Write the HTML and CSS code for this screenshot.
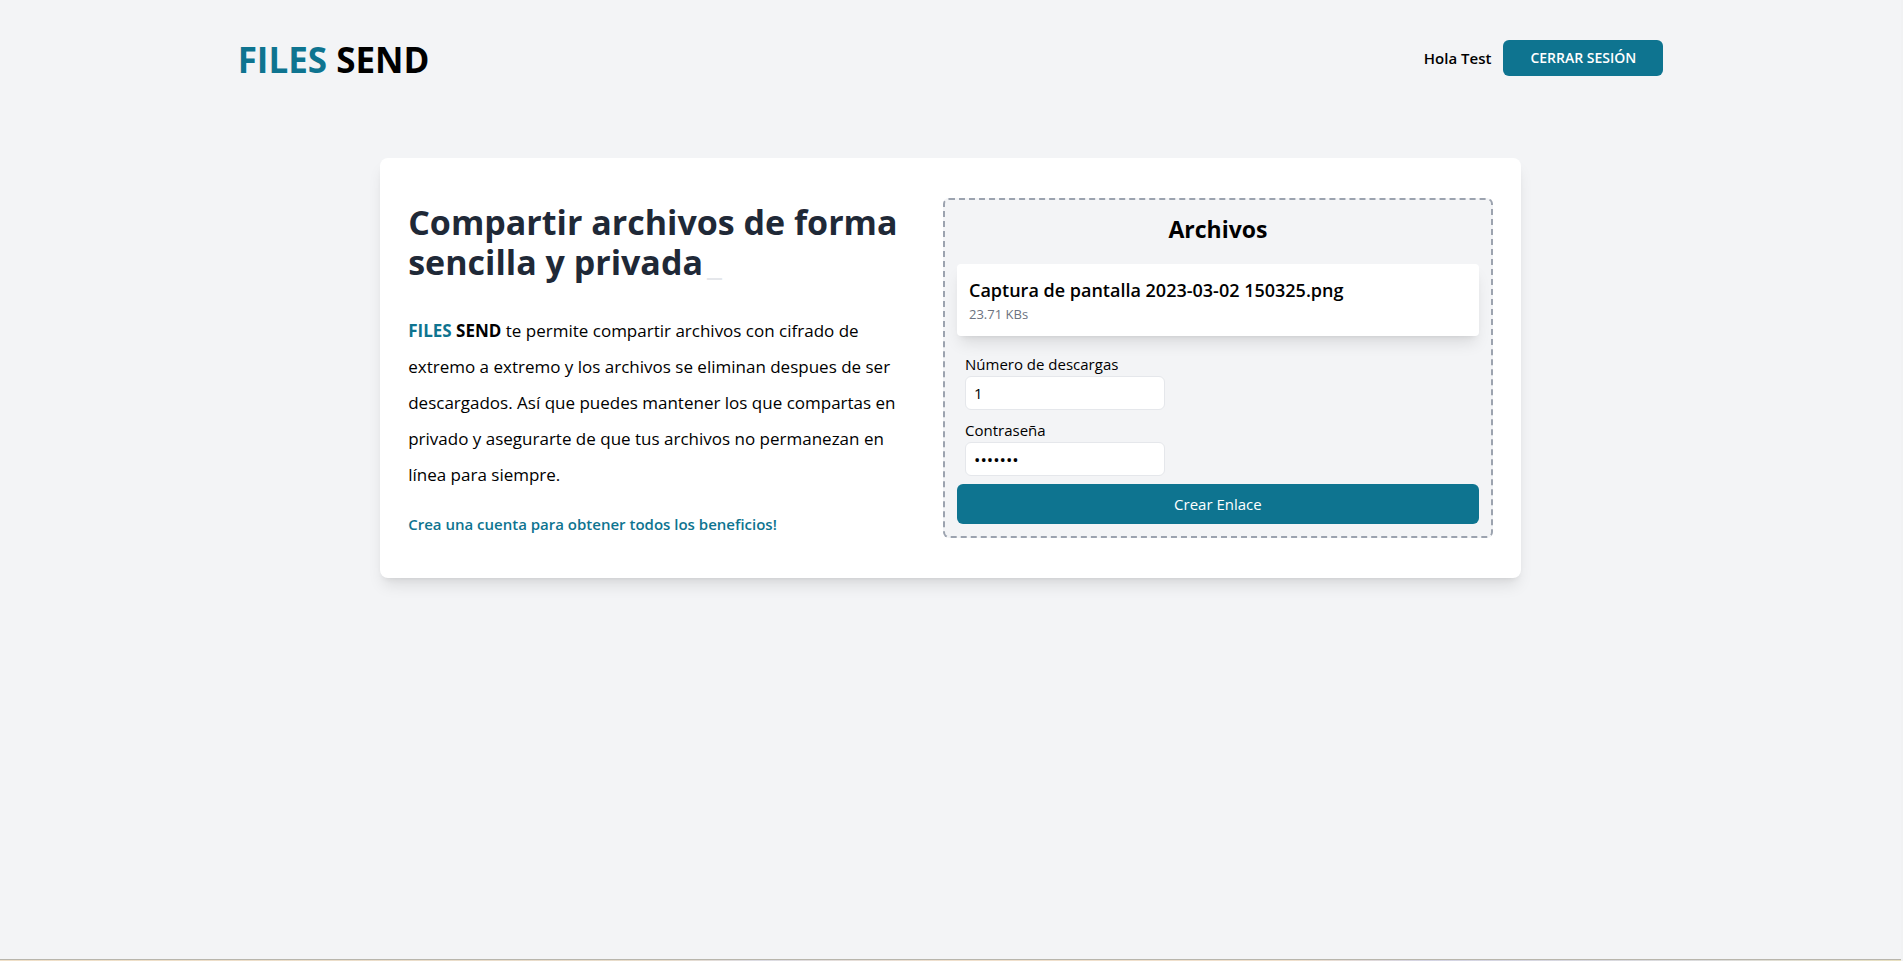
FILE: index.html
```html
<!DOCTYPE html>
<html lang="es">
<head>
<meta charset="utf-8">
<meta name="viewport" content="width=device-width, initial-scale=1">
<title>Files Send</title>
<link rel="stylesheet" href="styles.css">
</head>
<body>
<div class="page">
  <header class="header">
    <a class="logo" href="#"><span class="accent">FILES</span> SEND</a>
    <div class="session">
      <p class="greeting">Hola Test</p>
      <button class="logout" type="button">Cerrar Sesión</button>
    </div>
  </header>
  <main class="card">
    <section class="intro">
      <h1 class="title">Compartir archivos de forma sencilla y privada<span class="caret">_</span></h1>
      <p class="description"><strong class="accent">FILES</strong> <strong>SEND</strong> te permite compartir archivos con cifrado de extremo a extremo y los archivos se eliminan despues de ser descargados. Así que puedes mantener los que compartas en privado y asegurarte de que tus archivos no permanezan en línea para siempre.</p>
      <a class="signup" href="#">Crea una cuenta para obtener todos los beneficios!</a>
    </section>
    <form class="dropzone">
      <h2 class="subtitle">Archivos</h2>
      <ul class="files">
        <li class="file">
          <p class="file-name">Captura de pantalla 2023-03-02 150325.png</p>
          <p class="file-size">23.71 KBs</p>
        </li>
      </ul>
      <div class="fields">
        <div class="field">
          <label for="downloads">Número de descargas</label>
          <input id="downloads" type="text" inputmode="numeric" value="1">
        </div>
        <div class="field">
          <label for="password">Contraseña</label>
          <input id="password" class="password" type="password" value="1234567">
        </div>
      </div>
      <button class="create" type="button">Crear Enlace</button>
    </form>
  </main>
</div>
</body>
</html>
```
FILE: styles.css
```css
*, *::before, *::after { box-sizing: border-box; }
body {
  margin: 0;
  min-height: 100vh;
  display: flex;
  flex-direction: column;
  border-right: 2px solid #f1f2f3;
  background: #f3f4f6;
  color: #000;
  font: 15px/24px "Segoe UI", "Open Sans", sans-serif;
}
body::after {
  content: "";
  height: 2px;
  margin-top: auto;
  border-top: 1px solid #b8b5ac;
  background: linear-gradient(90deg, #f0e0c8, #e8dccb 35%, #dcdce4 40%, #f0e0cc 50%, #f0e0cc 68%, #d4d4e4 75%, #dcdcdc 90%, #e8e0c0);
}
h1, h2, p, ul { margin: 0; padding: 0; }
ul { list-style: none; }
a { text-decoration: none; color: inherit; }
button, input { font: inherit; }
.page { width: 75%; margin: 0 auto; padding-top: 40px; }
.accent { color: #0e7490; }
.header { display: flex; justify-content: space-between; align-items: flex-start; }
.logo { font-size: 35px; line-height: 40px; font-weight: 700; }
.session { display: flex; align-items: center; gap: 12px; }
.greeting { font-weight: 600; }
.logout {
  width: 160px;
  height: 36px;
  border: 0;
  border-radius: 6px;
  background: #0e7490;
  color: #fff;
  font-size: 14px;
  font-weight: 600;
  text-transform: uppercase;
}
.card {
  display: grid;
  grid-template-columns: 9fr 10fr;
  gap: 40px;
  width: 80%;
  margin: 78px auto 0;
  padding: 40px 28px;
  border-radius: 8px;
  background: #fff;
  box-shadow: 0 10px 15px -3px rgba(0, 0, 0, .1), 0 4px 6px -4px rgba(0, 0, 0, .1);
}
.intro { padding-top: 4px; }
.title { font-size: 34px; line-height: 40px; font-weight: 700; color: #1f2937; }
.caret { margin-left: 4px; color: #e5e7eb; font-weight: 400; }
.description { margin-top: 31px; font-size: 17px; line-height: 36px; }
.signup { display: inline-block; margin-top: 19px; font-weight: 600; color: #0e7490; }
.dropzone {
  display: flex;
  flex-direction: column;
  padding: 12px;
  border: 2px dashed #9ca3af;
  border-radius: 6px;
  background: #f3f4f6;
}
.subtitle { font-size: 23px; line-height: 34px; font-weight: 700; text-align: center; }
.files { margin-top: 18px; }
.file {
  height: 72px;
  padding: 12px;
  border-radius: 4px;
  background: #fff;
  box-shadow: 0 10px 15px -3px rgba(0, 0, 0, .1), 0 4px 6px -4px rgba(0, 0, 0, .1);
}
.file-name { font-size: 18px; line-height: 28px; font-weight: 600; }
.file-size { font-size: 13px; line-height: 20px; color: #6b7280; }
.fields { display: grid; gap: 8px; margin: 16px 8px 8px; }
.field { display: flex; flex-direction: column; align-items: flex-start; }
.field input {
  width: 200px;
  height: 34px;
  padding: 0 8px;
  border: 1px solid #e5e7eb;
  border-radius: 6px;
  background: #fff;
  color: #000;
}
.field .password { font-size: 17px; }
.create {
  height: 40px;
  border: 0;
  border-radius: 6px;
  background: #0e7490;
  color: #fff;
}
```
